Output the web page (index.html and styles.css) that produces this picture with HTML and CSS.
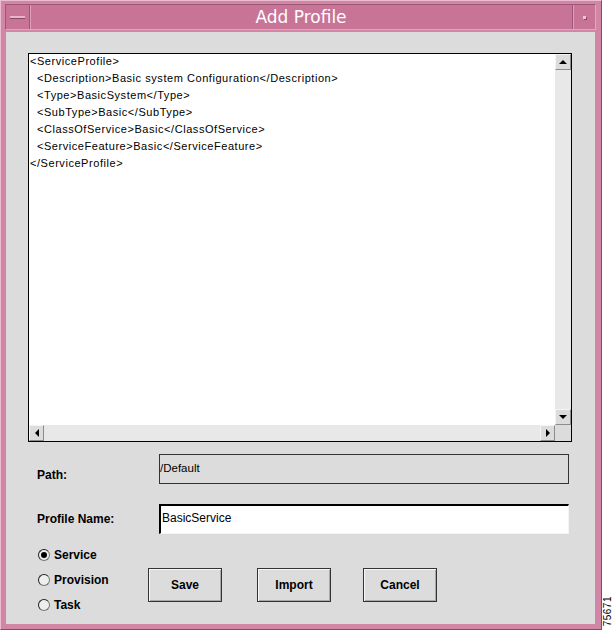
FILE: index.html
```html
<!DOCTYPE html>
<html>
<head>
<meta charset="utf-8">
<link rel="stylesheet" href="styles.css">
</head>
<body>
<div class="page">
  <div class="window">
    <div class="titlebar">
      <div class="tb-btn tb-left"><span class="dash"></span></div>
      <div class="tb-title">Add Profile</div>
      <div class="tb-btn tb-right"><span class="dot"></span></div>
    </div>
    <div class="content">
      <div class="editor">
        <div class="editor-text">
          <div class="line">&lt;ServiceProfile&gt;</div>
          <div class="line ind">&lt;Description&gt;Basic system Configuration&lt;/Description&gt;</div>
          <div class="line ind">&lt;Type&gt;BasicSystem&lt;/Type&gt;</div>
          <div class="line ind">&lt;SubType&gt;Basic&lt;/SubType&gt;</div>
          <div class="line ind">&lt;ClassOfService&gt;Basic&lt;/ClassOfService&gt;</div>
          <div class="line ind">&lt;ServiceFeature&gt;Basic&lt;/ServiceFeature&gt;</div>
          <div class="line">&lt;/ServiceProfile&gt;</div>
        </div>
        <div class="vscroll">
          <div class="sb-btn"><span class="arr arr-up"></span></div>
          <div class="sb-track"></div>
          <div class="sb-btn"><span class="arr arr-down"></span></div>
        </div>
        <div class="hscroll">
          <div class="sb-btn"><span class="arr arr-left"></span></div>
          <div class="sb-track"></div>
          <div class="sb-btn"><span class="arr arr-right"></span></div>
        </div>
        <div class="sb-corner"></div>
      </div>

      <div class="form">
        <div class="label label-path">Path:</div>
        <div class="field field-ro">/Default</div>
        <div class="label">Profile Name:</div>
        <div class="field field-edit">BasicService</div>
      </div>

      <div class="bottom">
        <div class="radios">
          <div class="radio"><span class="circle on"></span><span>Service</span></div>
          <div class="radio"><span class="circle"></span><span>Provision</span></div>
          <div class="radio"><span class="circle"></span><span>Task</span></div>
        </div>
        <div class="buttons">
          <div class="btn">Save</div>
          <div class="btn btn-import">Import</div>
          <div class="btn btn-cancel">Cancel</div>
        </div>
      </div>
    </div>
  </div>
  <div class="side"><span class="fig">75671</span></div>
</div>
</body>
</html>
```

FILE: styles.css
```css
* { box-sizing: border-box; }
html, body { margin: 0; padding: 0; background: #ffffff; }
body { font-family: "Liberation Sans", Arial, sans-serif; color: #000; }

.page {
  display: flex;
  width: 613px;
  height: 630px;
}

.window {
  width: 602px;
  height: 630px;
  display: flex;
  flex-direction: column;
  background: #d286a6;
  border: 1px solid;
  border-color: #ecbcd0 #8a4866 #8a4866 #ecbcd0;
  padding: 3px 5px 5px 4px;
}

.titlebar {
  height: 26px;
  display: flex;
  background: #c87497;
  border: 1px solid;
  border-color: #9c5676 #e2a6c0 #e2a6c0 #9c5676;
}
.tb-btn {
  width: 24px;
  display: flex;
  align-items: center;
  justify-content: center;
}
.tb-left { border-right: 1px solid #9c5676; box-shadow: 1px 0 0 #dea0bb; }
.tb-right { width: 23px; border-left: 1px solid #9c5676; box-shadow: inset 1px 0 0 #dea0bb; }
.dash {
  width: 15px;
  height: 3px;
  background: #e8b6cb;
  border-bottom: 1px solid #8a4866;
}
.dot {
  width: 3px;
  height: 3px;
  background: #f0c4d6;
  box-shadow: 1px 1px 0 #8a4866;
}
.tb-title {
  flex: 1;
  text-align: center;
  color: #ffffff;
  font-family: "DejaVu Sans", sans-serif;
  font-size: 17px;
  line-height: 24px;
}

.content {
  flex: 1;
  margin: 2px 1px 0 1px;
  background: #dcdcdc;
  padding: 21px 23px 0 22px;
  display: flex;
  flex-direction: column;
}

.editor {
  width: 544px;
  height: 389px;
  border: 1px solid #000;
  background: #ffffff;
  display: grid;
  grid-template-columns: 1fr 16px;
  grid-template-rows: 1fr 16px;
}
.editor-text {
  padding: 0 0 0 1px;
  font-size: 11px;
  letter-spacing: 0.55px;
  line-height: 17px;
  overflow: hidden;
  margin-top: -1px;
}
.line { white-space: pre; }
.ind { padding-left: 7px; }

.vscroll {
  display: flex;
  flex-direction: column;
  background: #e8e8e8;
}
.hscroll {
  display: flex;
  background: #e8e8e8;
}
.sb-track { flex: 1; }
.sb-btn {
  width: 16px;
  height: 16px;
  background: #dcdcdc;
  border: 1px solid;
  border-color: #f4f4f4 #8c8c8c #8c8c8c #f4f4f4;
  display: flex;
  align-items: center;
  justify-content: center;
}
.hscroll .sb-btn { width: 15px; }
.sb-corner { background: #dcdcdc; }
.arr { width: 0; height: 0; border-style: solid; }
.arr-up { border-width: 0 4px 4px 4px; border-color: transparent transparent #000 transparent; }
.arr-down { border-width: 4px 4px 0 4px; border-color: #000 transparent transparent transparent; }
.arr-left { border-width: 4px 4px 4px 0; border-color: transparent #000 transparent transparent; }
.arr-right { border-width: 4px 0 4px 4px; border-color: transparent transparent transparent #000; }

.form {
  margin-top: 12px;
  display: grid;
  grid-template-columns: 131px 410px;
  row-gap: 20px;
}
.label {
  padding-left: 9px;
  font-weight: bold;
  font-size: 12px;
  align-self: center;
}
.label-path { align-self: end; padding-bottom: 2px; }
.field {
  height: 30px;
  font-size: 12px;
}
.field-ro {
  background: #dcdcdc;
  border: 1px solid #333;
  padding: 7px 0 0 0;
  font-size: 11.5px;
}
.field-edit {
  background: #ffffff;
  border-style: solid;
  border-width: 2px 1px 1px 2px;
  border-color: #000 #f4f4f4 #f4f4f4 #000;
  padding: 4px 0 0 1px;
  line-height: 16px;
}

.bottom {
  margin-top: 8px;
  display: flex;
}
.radios {
  width: 120px;
  padding-left: 10px;
  display: flex;
  flex-direction: column;
}
.radio {
  height: 25px;
  display: flex;
  align-items: center;
  gap: 4px;
  font-weight: bold;
  font-size: 12px;
}
.circle {
  width: 12px;
  height: 12px;
  border-radius: 50%;
  border: 1px solid;
  border-color: #222 #777 #777 #222;
  background: #eeeeee;
  display: flex;
  align-items: center;
  justify-content: center;
}
.circle.on::after {
  content: "";
  width: 6px;
  height: 6px;
  border-radius: 50%;
  background: #000;
}

.buttons {
  display: flex;
  padding-top: 26px;
  align-items: flex-start;
}
.btn {
  width: 74px;
  height: 34px;
  border: 1px solid #333;
  box-shadow: inset 1px 1px 0 #f8f8f8, inset -1px -1px 0 #a8a8a8;
  background: #dcdcdc;
  font-weight: bold;
  font-size: 12px;
  display: flex;
  align-items: center;
  justify-content: center;
}
.btn-import { margin-left: 35px; }
.btn-cancel { margin-left: 32px; }

.side {
  width: 11px;
  display: flex;
  flex-direction: column;
  justify-content: flex-end;
  align-items: center;
  padding-bottom: 4px;
}
.fig {
  writing-mode: vertical-rl;
  transform: rotate(180deg);
  font-size: 10px;
  line-height: 10px;
  letter-spacing: 0.5px;
}
```
